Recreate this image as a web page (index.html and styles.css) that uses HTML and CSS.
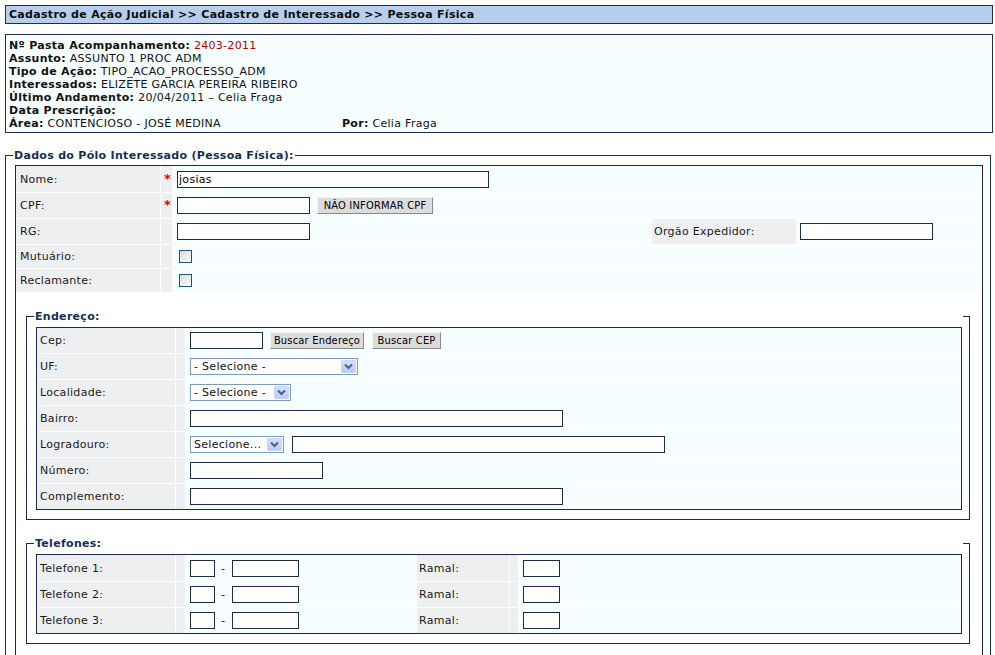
FILE: index.html
```html
<!DOCTYPE html>
<html lang="pt-BR">
<head>
<meta charset="utf-8">
<title>Cadastro de Interessado - Pessoa Física</title>
<link rel="stylesheet" href="styles.css">
</head>
<body>
<div class="titlebar">Cadastro de Ação Judicial &gt;&gt; Cadastro de Interessado &gt;&gt; Pessoa Física</div>

<div class="infobox">
  <div class="line"><b>Nº Pasta Acompanhamento:</b> <span class="red">2403-2011</span></div>
  <div class="line"><b>Assunto:</b> ASSUNTO 1 PROC ADM</div>
  <div class="line"><b>Tipo de Ação:</b> TIPO_ACAO_PROCESSO_ADM</div>
  <div class="line"><b>Interessados:</b> ELIZETE GARCIA PEREIRA RIBEIRO</div>
  <div class="line"><b>Último Andamento:</b> 20/04/2011 – Celia Fraga</div>
  <div class="line"><b>Data Prescrição:</b></div>
  <div class="line split"><span class="area"><b>Área:</b> CONTENCIOSO - JOSÉ MEDINA</span><span><b>Por:</b> Celia Fraga</span></div>
</div>

<div class="fs fs-outer">
  <div class="fs-top">
    <span class="fs-lead"></span>
    <span class="fs-legend">Dados do Pólo Interessado (Pessoa Física):</span>
    <span class="fs-rest"></span>
  </div>
  <div class="fs-box">
    <div class="tbl main">
      <div class="grid-main">
        <div class="lbl">Nome:</div>
        <div class="req"><span class="star">*</span></div>
        <div class="val span3"><input class="inp w312" type="text" value="josias"></div>

        <div class="lbl">CPF:</div>
        <div class="req"><span class="star">*</span></div>
        <div class="val span3"><input class="inp w133" type="text"><button class="btn btn-cpf" type="button">NÃO INFORMAR CPF</button></div>

        <div class="lbl">RG:</div>
        <div class="req"></div>
        <div class="val"><input class="inp w133" type="text"></div>
        <div class="lbl lbl2">Orgão Expedidor:</div>
        <div class="val val2"><input class="inp w133" type="text"></div>

        <div class="lbl">Mutuário:</div>
        <div class="req"></div>
        <div class="val span3"><span class="chk"></span></div>

        <div class="lbl">Reclamante:</div>
        <div class="req"></div>
        <div class="val span3"><span class="chk"></span></div>
      </div>

      <div class="sections">
        <div class="fs fs-inner">
          <div class="fs-top">
            <span class="fs-lead"></span>
            <span class="fs-legend">Endereço:</span>
            <span class="fs-gap"></span>
            <span class="fs-tail"></span>
          </div>
          <div class="fs-box">
            <div class="tbl grid-end">
              <div class="lbl">Cep:</div><div class="req"></div>
              <div class="val"><input class="inp w73" type="text"><button class="btn btn-end" type="button">Buscar Endereço</button><button class="btn btn-cep" type="button">Buscar CEP</button></div>

              <div class="lbl">UF:</div><div class="req"></div>
              <div class="val"><span class="sel w168"><span class="sel-txt">- Selecione -</span><span class="sel-arrow"><svg width="9" height="7" viewBox="0 0 9 7"><path d="M1 1.5 L4.5 5 L8 1.5" fill="none" stroke="#4a5f8a" stroke-width="2"/></svg></span></span></div>

              <div class="lbl">Localidade:</div><div class="req"></div>
              <div class="val"><span class="sel w101"><span class="sel-txt">- Selecione -</span><span class="sel-arrow"><svg width="9" height="7" viewBox="0 0 9 7"><path d="M1 1.5 L4.5 5 L8 1.5" fill="none" stroke="#4a5f8a" stroke-width="2"/></svg></span></span></div>

              <div class="lbl">Bairro:</div><div class="req"></div>
              <div class="val"><input class="inp w373" type="text"></div>

              <div class="lbl">Logradouro:</div><div class="req"></div>
              <div class="val"><span class="sel w94"><span class="sel-txt">Selecione...</span><span class="sel-arrow"><svg width="9" height="7" viewBox="0 0 9 7"><path d="M1 1.5 L4.5 5 L8 1.5" fill="none" stroke="#4a5f8a" stroke-width="2"/></svg></span></span><input class="inp w373 ml8" type="text"></div>

              <div class="lbl">Número:</div><div class="req"></div>
              <div class="val"><input class="inp w133" type="text"></div>

              <div class="lbl">Complemento:</div><div class="req"></div>
              <div class="val"><input class="inp w373" type="text"></div>
            </div>
          </div>
        </div>

        <div class="fs fs-inner">
          <div class="fs-top">
            <span class="fs-lead"></span>
            <span class="fs-legend">Telefones:</span>
            <span class="fs-gap"></span>
            <span class="fs-tail"></span>
          </div>
          <div class="fs-box">
            <div class="tbl grid-tel">
              <div class="lbl">Telefone 1:</div><div class="req"></div>
              <div class="val"><input class="inp w25" type="text"><span class="dash">-</span><input class="inp w67" type="text"></div>
              <div class="lbl lbl2">Ramal:</div><div class="req"></div>
              <div class="val"><input class="inp w37" type="text"></div>

              <div class="lbl">Telefone 2:</div><div class="req"></div>
              <div class="val"><input class="inp w25" type="text"><span class="dash">-</span><input class="inp w67" type="text"></div>
              <div class="lbl lbl2">Ramal:</div><div class="req"></div>
              <div class="val"><input class="inp w37" type="text"></div>

              <div class="lbl">Telefone 3:</div><div class="req"></div>
              <div class="val"><input class="inp w25" type="text"><span class="dash">-</span><input class="inp w67" type="text"></div>
              <div class="lbl lbl2">Ramal:</div><div class="req"></div>
              <div class="val"><input class="inp w37" type="text"></div>
            </div>
          </div>
        </div>
      </div>
    </div>
  </div>
</div>
</body>
</html>
```

FILE: styles.css
```css
html {
  overflow: hidden;
}
body {
  margin: 0;
  padding: 5px 2px 0 5px;
  font-family: "DejaVu Sans", Verdana, sans-serif;
  font-size: 11px;
  letter-spacing: 0.3px;
  color: #111;
  background: #fff;
}

.titlebar {
  border: 1px solid #1c2d48;
  background: #b7ceec;
  height: 17px;
  line-height: 17px;
  padding-left: 3px;
  font-weight: bold;
  color: #0d0d0d;
  white-space: nowrap;
}

.infobox {
  margin-top: 10px;
  border: 1px solid #1c2d48;
  background: #f7feff;
  padding: 4px 3px 2px;
}
.line {
  height: 13px;
  line-height: 13px;
  white-space: nowrap;
}
.red { color: #b00000; }
.split { display: flex; }
.area { width: 333px; }

/* fieldsets */
.fs-outer {
  margin-top: 16px;
  margin-right: 2px;
}
.fs-top {
  display: flex;
  height: 13px;
  align-items: center;
}
.fs-lead {
  align-self: flex-end;
  height: 6px;
  width: 6px;
  border-top: 1px solid #0b3a3c;
  border-left: 1px solid #0b3a3c;
}
.fs-outer .fs-lead { width: 7px; }
.fs-legend {
  font-weight: bold;
  color: #17304f;
  padding: 0 1px 0 1px;
  line-height: 13px;
  white-space: nowrap;
}
.fs-rest {
  flex: 1;
  align-self: flex-end;
  height: 6px;
  border-top: 1px solid #0b3a3c;
  border-right: 1px solid #0b3a3c;
}
.fs-gap { flex: 1; }
.fs-tail {
  align-self: flex-end;
  width: 6px;
  height: 6px;
  border-top: 1px solid #1b2b45;
  border-right: 1px solid #1b2b45;
}
.fs-box {
  border: 1px solid #0b3a3c;
  border-top: none;
}
.fs-outer > .fs-box {
  padding: 3px 7px 0 9px;
}
.fs-inner > .fs-box {
  padding: 4px 7px 9px 9px;
  border-color: #1b2b45;
}
.fs-inner .fs-lead { border-color: #1b2b45; }

/* tables */
.tbl {
  border: 1px solid #1b2b45;
  background: #fff;
}
.main {
  padding-bottom: 40px;
}
.grid-main {
  display: grid;
  grid-template-columns: 144px 11px 478px 144px 1fr;
  grid-template-rows: 26px 25px 25px 23px 23px;
  gap: 1px;
}
.grid-end {
  display: grid;
  grid-template-columns: 138px 9px 1fr;
  grid-auto-rows: 25px;
  gap: 1px;
}
.grid-tel {
  display: grid;
  grid-template-columns: 138px 9px 230px 92px 8px 1fr;
  grid-template-rows: 26px 25px 25px;
  gap: 1px;
}
.lbl {
  background: #eeeff1;
  display: flex;
  align-items: center;
  padding-left: 4px;
  color: #1a1a1a;
  white-space: nowrap;
}
.grid-end .lbl, .grid-tel .lbl { padding-left: 3px; }
.lbl2 { padding-left: 2px !important; }
.req {
  background: #eeeff1;
  display: flex;
  align-items: center;
  justify-content: center;
}
.star {
  color: #e00000;
  font-size: 13px;
  font-weight: bold;
  position: relative;
  top: -1px;
  left: 1px;
}
.val {
  background: #f7feff;
  display: flex;
  align-items: center;
  padding-left: 4px;
}
.val2 { padding-left: 3px; }
.span3 { grid-column: span 3; }

.inp {
  box-sizing: border-box;
  height: 17px;
  border: 1px solid #1c2c42;
  padding: 0 1px;
  margin: 0;
  font-family: "DejaVu Sans", Verdana, sans-serif;
  font-size: 11px;
  letter-spacing: 0.3px;
  color: #000;
  background: #fff;
  outline: none;
}
.w25 { width: 25px; }
.w37 { width: 37px; }
.w67 { width: 67px; }
.w73 { width: 73px; }
.w133 { width: 133px; }
.w312 { width: 312px; }
.w373 { width: 373px; }
.ml8 { margin-left: 8px; }

.btn {
  box-sizing: border-box;
  height: 17px;
  margin: 0;
  padding: 0;
  border: 1px solid;
  border-color: #f4f4f4 #8a8a8a #8a8a8a #f4f4f4;
  background: #dcdcdc;
  font-family: "DejaVu Sans Condensed", "DejaVu Sans", sans-serif;
  font-size: 11px;
  letter-spacing: 0.2px;
  color: #000;
  line-height: 15px;
}
.btn-cpf { width: 116px; margin-left: 7px; }
.btn-end { width: 94px; margin-left: 7px; }
.btn-cep { width: 69px; margin-left: 8px; }

.sel {
  box-sizing: border-box;
  height: 17px;
  border: 1px solid #7f9db9;
  background: #fff;
  display: flex;
  align-items: center;
  justify-content: space-between;
  padding: 0 1px 0 3px;
}
.w168 { width: 168px; }
.w101 { width: 101px; }
.w94 { width: 94px; }
.sel-txt {
  white-space: nowrap;
}
.sel-arrow {
  box-sizing: border-box;
  width: 15px;
  height: 13px;
  background: linear-gradient(#d3e0fd, #b9cdf9);
  border: 1px solid #c6d6fb;
  border-radius: 1px;
  display: flex;
  align-items: center;
  justify-content: center;
}

.chk {
  box-sizing: border-box;
  width: 13px;
  height: 13px;
  margin-left: 2px;
  border: 1px solid #1c5180;
  background: linear-gradient(135deg, #dcdcd5, #fbfbfa);
}

.dash {
  margin: 0 7px 0 6px;
}

.sections {
  padding: 18px 12px 0 10px;
  display: flex;
  flex-direction: column;
  gap: 17px;
}
```
